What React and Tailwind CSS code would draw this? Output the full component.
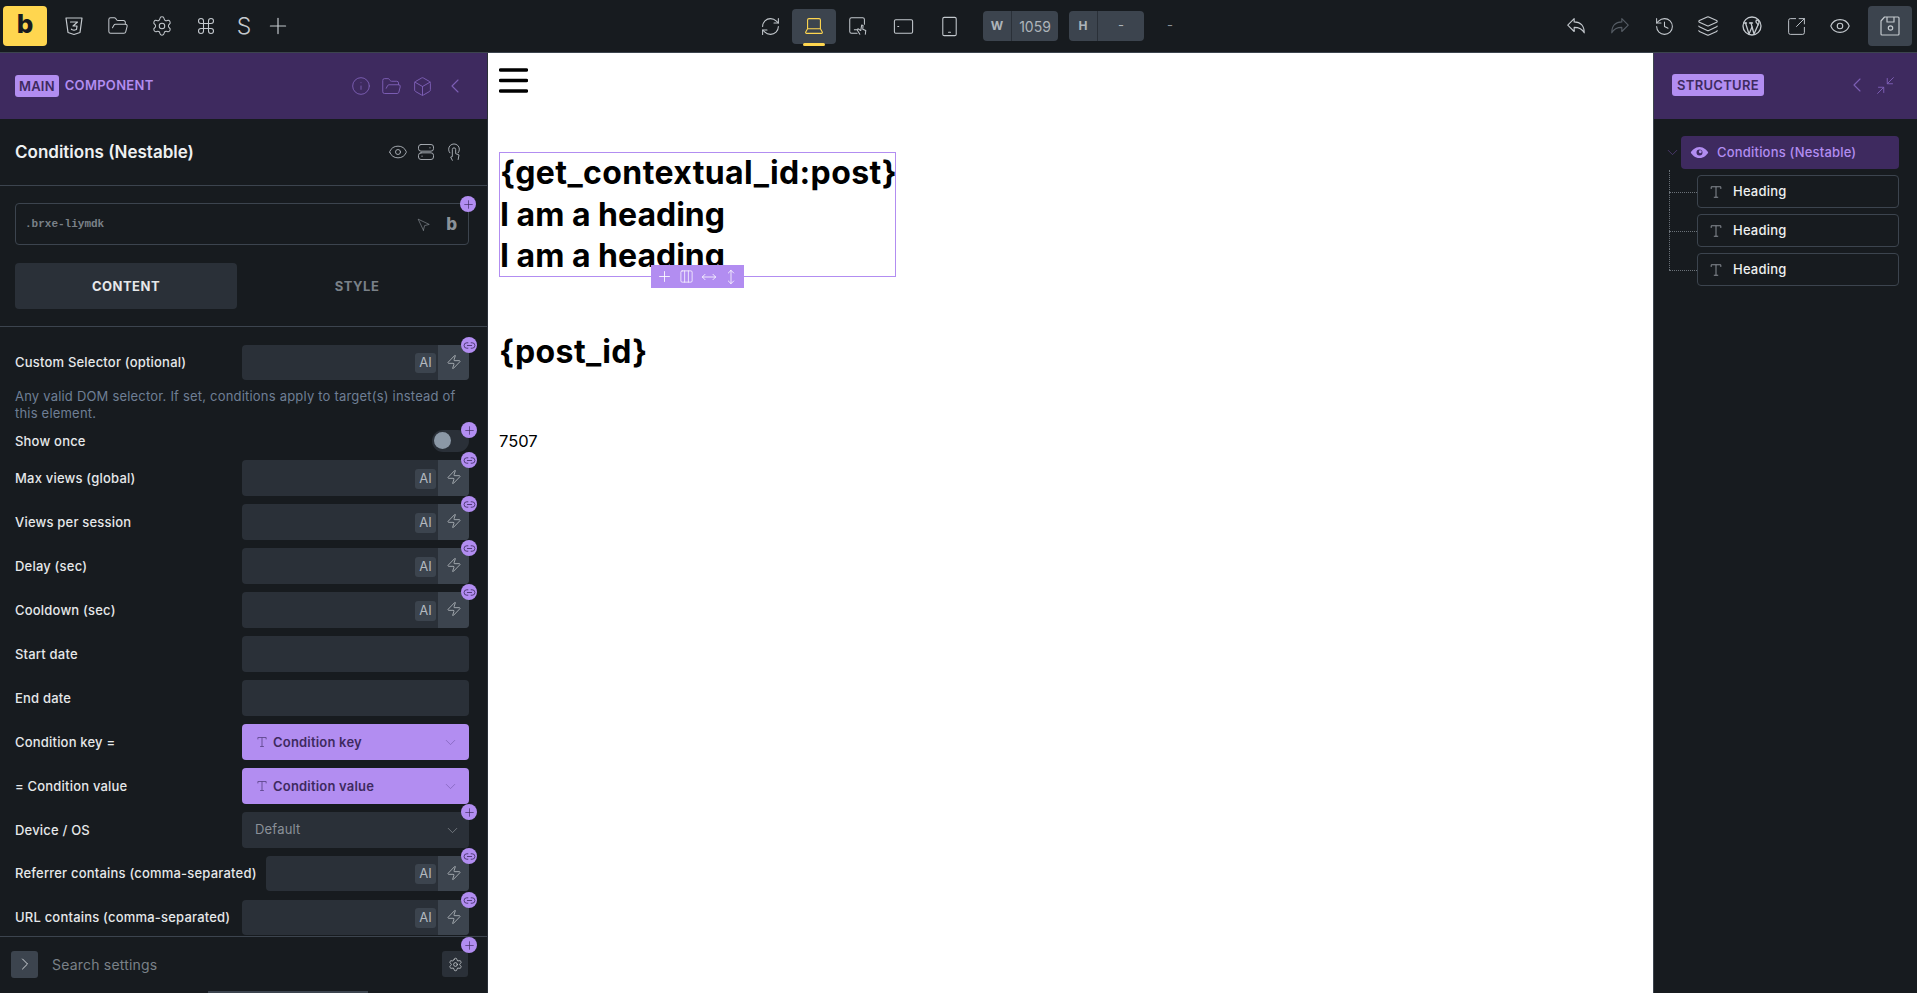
import { Box, ChevronDown, ChevronLeft, ChevronRight, Columns3, Command, Eye, FolderOpen, History, Info, Layers, Link2, Minimize2, MoveHorizontal, MoveVertical, Navigation, Plus, RefreshCw, Settings, SquareArrowOutUpRight, Zap } from "lucide-react";
import { TbBrandCss3, TbBrandWordpress } from "react-icons/tb";

function TIcon({ className = "" }) {
    return (
        <svg viewBox="0 0 16 16" className={className} fill="none" stroke="currentColor" strokeWidth="1.1">
            <path d="M2.5 4.5V2h11v2.5M8 2v12M5.5 14h5" />
        </svg>
    );
}

function Outline({ size = 22, className = "", strokeWidth = 1.2, children }) {
    return (
        <svg viewBox="0 0 24 24" width={size} height={size} className={className} fill="none" stroke="currentColor" strokeWidth={strokeWidth} strokeLinejoin="round" strokeLinecap="round">
            {children}
        </svg>
    );
}

function TopIcon({ children, className = "w-11" }) {
    return <div className={`h-10 flex items-center justify-center text-[#c4c9ce] ${className}`}>{children}</div>;
}

function AddBadge() {
    return (
        <span className="absolute -top-2 -right-2 w-4 h-4 rounded-full bg-[#b28df1] flex items-center justify-center text-[#3e2a5f] z-10">
            <Plus size={13} strokeWidth={1.25} />
        </span>
    );
}

function LinkBadge() {
    return (
        <span className="absolute -top-2 -right-2 w-4 h-4 rounded-full bg-[#b28df1] flex items-center justify-center text-[#3e2a5f] z-10">
            <Link2 size={13} strokeWidth={1.5} />
        </span>
    );
}

function DynamicInput({ width = "w-[227px]", height = "h-9" }) {
    return (
        <div className={`relative flex rounded-[4px] bg-[#2a3038] shrink-0 ${width} ${height}`}>
            <div className="flex-1 flex items-center justify-end pr-0.5 pt-[1px]">
                <span className="w-[21px] h-5 rounded-[3px] bg-[#3c444e] text-[#b4bac0] text-[13px] flex items-center justify-center">AI</span>
            </div>
            <div className="w-[31px] bg-[#3c444e] rounded-r-[4px] flex items-center justify-center text-[#c4c9ce]">
                <Zap size={16} strokeWidth={1.1} className="-mt-0.5" />
            </div>
            <LinkBadge />
        </div>
    );
}

function Label({ children }) {
    return <label className="pt-[1px] text-[13px] font-medium tracking-[0.2px] text-[#e6e8ea] whitespace-nowrap">{children}</label>;
}

function InputRow({ label, width, height, className = "" }) {
    return (
        <div className={`flex items-center justify-between ${className}`}>
            <Label>{label}</Label>
            <DynamicInput width={width} height={height} />
        </div>
    );
}

function PlainRow({ label }) {
    return (
        <div className="flex items-center justify-between">
            <Label>{label}</Label>
            <div className="w-[227px] h-9 rounded-[4px] bg-[#2a3038]" />
        </div>
    );
}

function PurpleSelectRow({ label, value }) {
    return (
        <div className="flex items-center justify-between">
            <Label>{label}</Label>
            <div className="w-[227px] h-9 rounded-[4px] bg-[#b28df1] text-[#3e2a5f] flex items-center pl-[14px] pr-[10px]">
                <TIcon className="w-[12px] h-[12px] mr-[5px] text-[#5a4385]" />
                <span className="pt-[1px] text-[13px] font-semibold tracking-[0.2px] flex-1">{value}</span>
                <ChevronDown size={17} strokeWidth={1} className="text-[#7d5fb5]" />
            </div>
        </div>
    );
}

function TreeChild({ last }) {
    return (
        <div className="relative ml-[33px] h-[33px] rounded-[4px] border border-[#3c444e] flex items-center pl-[11px]">
            <span className="absolute -left-[29px] top-[16px] w-[28px] border-t border-dotted border-[#6b7279]" />
            <span className={`absolute -left-[29px] -top-[6px] border-l border-dotted border-[#6b7279] ${last ? "h-[22px]" : "h-[40px]"}`} />
            <TIcon className="w-[14px] h-[14px] text-[#8b9198] mr-[10px]" />
            <span className="text-[13px] font-medium tracking-[0.2px] text-[#eef0f1]">Heading</span>
        </div>
    );
}

export default function App() {
    return (
        <div className="h-[993px] w-full overflow-hidden flex flex-col bg-white font-['Inter',sans-serif]">
            {/* top toolbar */}
            <header className="h-[53px] shrink-0 bg-[#171b1f] border-b border-[#3c444e] flex items-center justify-between relative">
                <div className="flex items-center pl-[3px]">
                    <div className="w-11 h-10 mr-[5px] rounded-[4px] bg-[#ffd64f] flex items-center justify-center text-[#171b1f] text-[26px] font-extrabold leading-none pb-1">b</div>
                    <TopIcon><TbBrandCss3 size={24} strokeWidth={1.2} /></TopIcon>
                    <TopIcon><FolderOpen size={22} strokeWidth={1.1} /></TopIcon>
                    <TopIcon><Settings size={22} strokeWidth={1.1} /></TopIcon>
                    <TopIcon><Command size={20} strokeWidth={1.3} /></TopIcon>
                    <TopIcon className="w-8 text-[23px] font-light">S</TopIcon>
                    <TopIcon className="w-[36px]"><Plus size={26} strokeWidth={1.1} /></TopIcon>
                </div>

                <div className="absolute left-[748px] top-0 h-[52px] flex items-center">
                    <TopIcon><RefreshCw size={21} strokeWidth={1.2} /></TopIcon>
                    <div className="relative w-11 h-[35px] rounded-[4px] bg-[#3c444e] flex items-center justify-center text-[#ffd64f]">
                        <Outline size={22}>
                            <path d="M5 15V5.5A1.5 1.5 0 0 1 6.5 4h11A1.5 1.5 0 0 1 19 5.5V15M5 15h14l2 3.5a1 1 0 0 1-1 1.5H4a1 1 0 0 1-1-1.5Z" />
                        </Outline>
                        <span className="absolute left-[11px] -bottom-[2px] w-[22px] h-[3px] rounded-sm bg-[#ffd64f]" />
                    </div>
                    <TopIcon>
                        <Outline size={22} strokeWidth={1.1}>
                            <path d="M11 20H5a2 2 0 0 1-2-2V5a2 2 0 0 1 2-2h12a2 2 0 0 1 2 2v5M8 16h3M14 21l-3-5 1-1 3 2 1-6 1.5.5-.3 4 3.3 1.5-.5 4" />
                        </Outline>
                    </TopIcon>
                    <TopIcon className="w-[46px]">
                        <Outline size={23} strokeWidth={1.1}><rect x="2.5" y="5" width="19" height="14" rx="1.5" /><path d="M6 12h1" /></Outline>
                    </TopIcon>
                    <TopIcon className="w-[46px]">
                        <Outline size={23} strokeWidth={1.1}><rect x="5" y="2.5" width="14" height="19" rx="1.5" /><path d="M11 18h2" /></Outline>
                    </TopIcon>
                    <div className="ml-[11px] w-[75px] h-[30px] rounded-[4px] bg-[#3c444e] flex items-center text-[#aeb4ba]">
                        <span className="w-[29px] text-center text-[12px] font-bold border-r border-[#2a3038] leading-[30px]">W</span>
                        <span className="flex-1 text-center text-[14px]">1059</span>
                    </div>
                    <div className="ml-[11px] w-[75px] h-[30px] rounded-[4px] bg-[#3c444e] flex items-center text-[#aeb4ba]">
                        <span className="w-[29px] text-center text-[12px] font-bold border-r border-[#2a3038] leading-[30px]">H</span>
                        <span className="flex-1 text-center text-[13px]">-</span>
                    </div>
                    <span className="ml-[23px] text-[#8b9198] text-[13px]">-</span>
                </div>

                <div className="flex items-center pr-[5px]">
                    <TopIcon>
                        <Outline size={22}><path d="M10 4 3 11l7 7v-4.5c5 0 8.500 1 11 6 0-8-4-12-11-12Z" /></Outline>
                    </TopIcon>
                    <TopIcon className="w-11 !text-[#555c64]">
                        <Outline size={22}><path d="M14 4l7 7-7 7v-4.500c-5 0-8.500 1-11 6 0-8 4-12 11-12Z" /></Outline>
                    </TopIcon>
                    <TopIcon><History size={21} strokeWidth={1.2} /></TopIcon>
                    <TopIcon><Layers size={22} strokeWidth={1.2} /></TopIcon>
                    <TopIcon><TbBrandWordpress size={24} strokeWidth={1.3} /></TopIcon>
                    <TopIcon><SquareArrowOutUpRight size={21} strokeWidth={1.1} /></TopIcon>
                    <TopIcon className="w-11 mr-[6px]"><Eye size={22} strokeWidth={1.2} /></TopIcon>
                    <div className="w-11 h-10 rounded-[4px] bg-[#3c444e] flex items-center justify-center text-[#c4c9ce]">
                        <Outline size={24} strokeWidth={1.2}>
                            <path d="M6.500 3H20a1 1 0 0 1 1 1v16a1 1 0 0 1-1 1H4a1 1 0 0 1-1-1V7ZM9 3v5h7V3M8 21v-0h9" />
                            <circle cx="12.500" cy="14" r="2.200" />
                        </Outline>
                    </div>
                </div>
            </header>

            <div className="flex-1 flex min-h-0">
                {/* left settings panel */}
                <aside className="relative w-[488px] shrink-0 bg-[#171b1f] flex flex-col border-r border-[#2a3038] overflow-hidden">
                    <div className="h-[66px] shrink-0 bg-[#3e2a5f] flex items-center pl-[15px] pr-[20px]">
                        <span className="h-[22px] px-1 rounded-[3px] bg-[#b28df1] text-[#3e2a5f] text-[13px] font-semibold tracking-[0.2px] leading-[22px]">MAIN</span>
                        <span className="ml-[6px] text-[13px] font-semibold tracking-[0.3px] text-[#b28df1] flex-1">COMPONENT</span>
                        <div className="flex items-center gap-[10px] text-[#7d5fb5]">
                            <Info size={20} strokeWidth={1.1} />
                            <FolderOpen size={21} strokeWidth={1.1} />
                            <Box size={21} strokeWidth={1.1} />
                            <ChevronLeft size={24} strokeWidth={1.1} />
                        </div>
                    </div>

                    <div className="h-[67px] shrink-0 border-b border-[#3c444e] flex items-center pl-[15px] pr-[23px]">
                        <h3 className="flex-1 pt-[1px] text-[17px] font-semibold text-[#eef0f1]">Conditions (Nestable)</h3>
                        <div className="flex items-center gap-[8px] text-[#aeb4ba]">
                            <Eye size={20} strokeWidth={1.1} />
                            <Outline size={20} strokeWidth={1.1}>
                                <rect x="3" y="3" width="18" height="8" rx="3" />
                                <rect x="3" y="13" width="18" height="8" rx="3" />
                                <path d="M16.500 7h.5M7 17h.5" />
                            </Outline>
                            <Outline size={20} strokeWidth={1.1}>
                                <path d="M7 13a6.500 6.500 0 1 1 10 0M10 22l-2-4 2-.5V9a2 2 0 0 1 4 0v5l4 1.500-1 5.500" />
                            </Outline>
                        </div>
                    </div>

                    <div className="pl-[15px] pr-[18px] pt-[17px] pb-[17px] border-b border-[#3c444e] shrink-0">
                        <div className="relative h-[42px] rounded-[4px] border border-[#3c444e] flex items-center pl-[9px] pr-[11px] pt-[1px]">
                            <span className="flex-1 text-[11px] font-['Liberation_Mono',monospace] font-bold text-[#7a8188]">.brxe-liymdk</span>
                            <Navigation size={14} strokeWidth={1.1} className="text-[#8b9198] -rotate-90 mr-[15px]" />
                            <span className="text-[#8b9198] text-[17px] font-extrabold leading-none">b</span>
                            <AddBadge />
                        </div>
                        <div className="mt-[18px] flex">
                            <button className="w-[222px] h-[46px] pt-[1px] rounded-[4px] bg-[#2a3038] text-[13px] font-bold tracking-[0.5px] text-[#e6e8ea]">CONTENT</button>
                            <button className="flex-1 h-[46px] pt-[1px] pl-[8px] text-[13px] font-bold tracking-[0.5px] text-[#7a8188]">STYLE</button>
                        </div>
                    </div>

                    <div className="flex-1 min-h-0 overflow-hidden pl-[15px] pr-[18px] pt-[18px]">
                        <InputRow label="Custom Selector (optional)" height="h-[35px]" />
                        <p className="mt-[8px] text-[13px] leading-[17px] tracking-[0.2px] text-[#6f7f95]">Any valid DOM selector. If set, conditions apply to target(s) instead of this element.</p>
                        <div className="mt-[8px] h-[22px] flex items-center justify-between">
                            <Label>Show once</Label>
                            <div className="relative w-[37px] h-[22px] rounded-full bg-[#2a3038] flex items-center pl-[2px] pb-[1px]">
                                <span className="w-[17px] h-[17px] rounded-full bg-[#8b98a6]" />
                                <AddBadge />
                            </div>
                        </div>
                        <div className="mt-[8px] flex flex-col gap-2">
                            <InputRow label="Max views (global)" />
                            <InputRow label="Views per session" />
                            <InputRow label="Delay (sec)" />
                            <InputRow label="Cooldown (sec)" />
                            <PlainRow label="Start date" />
                            <PlainRow label="End date" />
                            <PurpleSelectRow label="Condition key =" value="Condition key" />
                            <PurpleSelectRow label="= Condition value" value="Condition value" />
                            <div className="flex items-center justify-between">
                                <Label>Device / OS</Label>
                                <div className="relative w-[227px] h-9 rounded-[4px] bg-[#2a3038] flex items-center pl-[13px] pr-[8px]">
                                    <span className="flex-1 text-[13px] tracking-[0.2px] text-[#8b9198]">Default</span>
                                    <ChevronDown size={17} strokeWidth={1} className="text-[#8b9198]" />
                                    <AddBadge />
                                </div>
                            </div>
                            <InputRow label="Referrer contains (comma-separated)" width="w-[203px]" height="h-[35px]" />
                            <InputRow label="URL contains (comma-separated)" height="h-[35px]" className="mt-[1px]" />
                        </div>
                    </div>

                    <div className="relative h-[55px] shrink-0 bg-[#171b1f] border-t border-[#3c444e] flex items-center pl-[11px] pr-[19px] z-10">
                        <span className="w-[27px] h-[27px] rounded-[3px] bg-[#3c444e] flex items-center justify-center text-[#d3d7da]">
                            <ChevronRight size={20} strokeWidth={1.2} />
                        </span>
                        <span className="ml-[14px] flex-1 text-[14px] tracking-[0.2px] text-[#7a8188]">Search settings</span>
                        <span className="w-[26px] h-[26px] rounded-[3px] bg-[#2a3038] flex items-center justify-center text-[#d3d7da]">
                            <Settings size={15} strokeWidth={1.2} />
                        </span>
                        <span className="absolute top-[8px] right-[18px] block w-4 h-4"><AddBadge /></span>
                    </div>
                    <div className="h-[2px] shrink-0 flex pl-[208px]"><span className="w-[160px] bg-[#3c444e]" /></div>
                </aside>

                {/* canvas */}
                <main className="flex-1 bg-white pl-[11px] text-black">
                    <svg viewBox="0 0 29 25" className="w-[29px] h-[25px] mt-[15px]">
                        <path d="M1.500 2h26M1.500 12.500h26M1.500 23h26" stroke="#000" strokeWidth="3.400" strokeLinecap="round" />
                    </svg>
                    <div className="relative w-[397px] mt-[59px] h-[125px] border border-[#b28df1]">
                        <div className="-mt-[1px]">
                            <h2 className="text-[32px] leading-[42px] font-bold tracking-[0.4px] whitespace-nowrap">{"{get_contextual_id:post}"}</h2>
                            <h2 className="text-[32px] leading-[41px] font-bold">I am a heading</h2>
                            <h2 className="text-[32px] leading-[41px] font-bold">I am a heading</h2>
                        </div>
                        <div className="absolute left-[151px] top-[112px] w-[93px] h-[23px] bg-[#b28df1] flex items-center justify-around px-0.5 text-white">
                            <Plus size={17} strokeWidth={1.2} />
                            <Columns3 size={15} strokeWidth={1.2} />
                            <MoveHorizontal size={16} strokeWidth={1.2} />
                            <MoveVertical size={16} strokeWidth={1.2} />
                        </div>
                    </div>
                    <h2 className="mt-[54px] text-[32px] leading-[41px] font-bold tracking-[0.4px]">{"{post_id}"}</h2>
                    <p className="mt-[57px] text-[16.500px] leading-6">7507</p>
                </main>

                {/* structure panel */}
                <aside className="w-[264px] shrink-0 bg-[#171b1f] border-l border-[#3c444e] flex flex-col">
                    <div className="h-[66px] bg-[#3e2a5f] flex items-center pl-[18px] pr-[21px] pb-[2px]">
                        <span className="h-[22px] px-[5px] rounded-[3px] bg-[#b28df1] text-[#3e2a5f] text-[13px] font-semibold tracking-[0.3px] leading-[22px] flex-none">STRUCTURE</span>
                        <div className="ml-auto flex items-center gap-[6px] text-[#7d5fb5]">
                            <ChevronLeft size={24} strokeWidth={1.1} />
                            <Minimize2 size={21} strokeWidth={1.1} />
                        </div>
                    </div>
                    <div className="pl-[10px] pr-[18px] pt-[17px] flex flex-col gap-[6px]">
                        <div className="flex items-center">
                            <ChevronDown size={17} strokeWidth={1} className="text-[#5a4385]" />
                            <div className="flex-1 h-[33px] rounded-[4px] bg-[#3e2a5f] flex items-center pl-[9px] text-[#b28df1]">
                                <svg viewBox="0 0 24 24" className="w-[19px] h-[19px] mr-[8px]" fill="currentColor">
                                    <path fillRule="evenodd" d="M12 5C6.500 5 2.500 9 1 12c1.500 3 5.500 7 11 7s9.500-4 11-7c-1.500-3-5.500-7-11-7Zm0 3.200a3.800 3.800 0 1 0 0 7.600 3.800 3.800 0 0 0 0-7.600Z" />
                                    <circle cx="13" cy="11" r="1.800" />
                                </svg>
                                <span className="text-[13px] font-medium tracking-[0.2px]">Conditions (Nestable)</span>
                            </div>
                        </div>
                        <TreeChild />
                        <TreeChild />
                        <TreeChild last />
                    </div>
                </aside>
            </div>
        </div>
    );
}
